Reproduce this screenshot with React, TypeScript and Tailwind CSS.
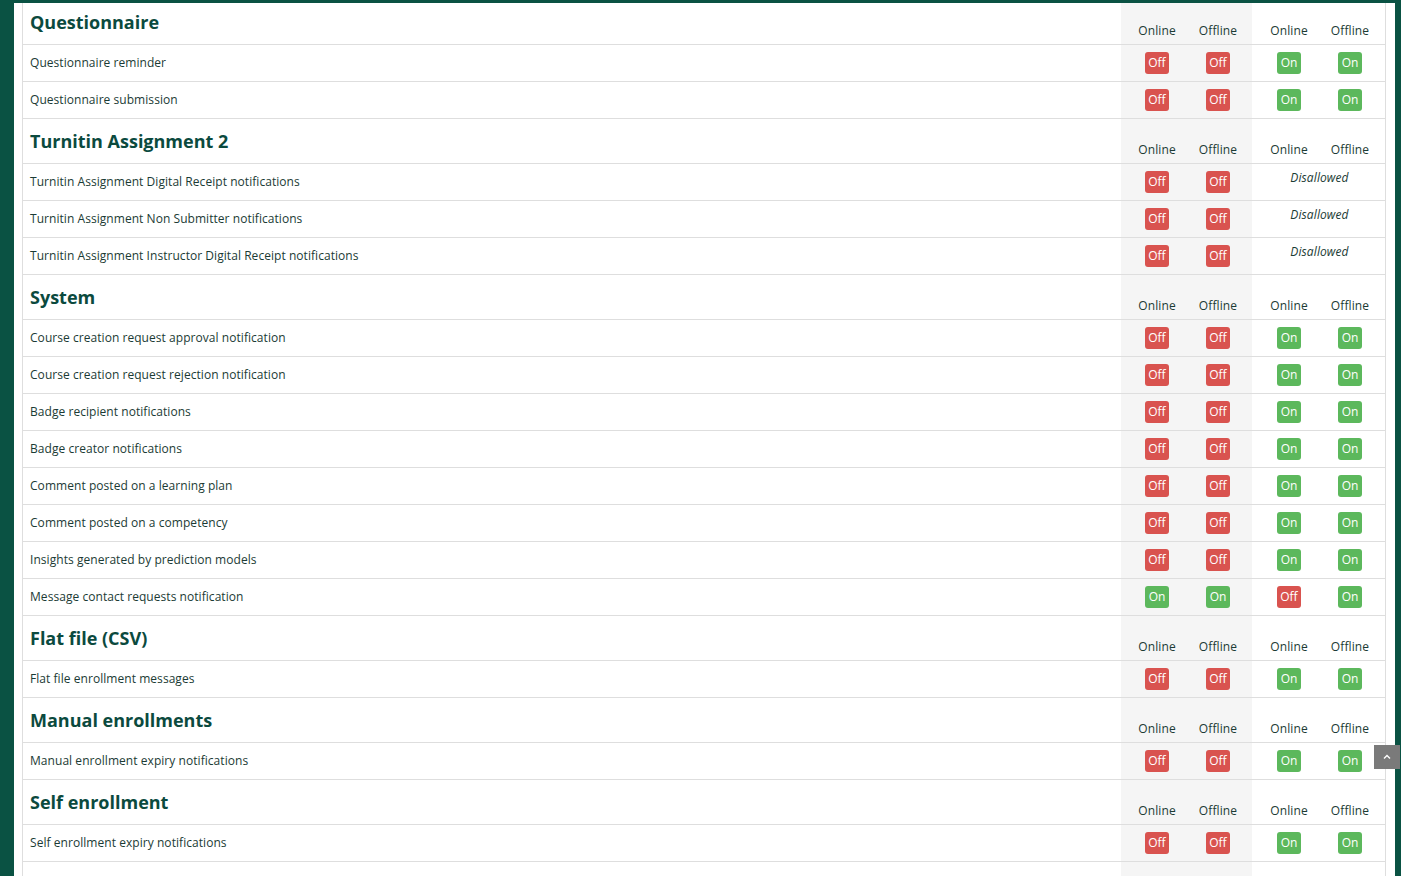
import React from "react";

type State = "on" | "off" | "dis";

interface Row {
  label: string;
  values: State[];
}

interface Section {
  title: string;
  rows: Row[];
}

const OFF_ON: State[] = ["off", "off", "on", "on"];
const OFF_DIS: State[] = ["off", "off", "dis", "dis"];

const sections: Section[] = [
  {
    title: "Questionnaire",
    rows: [
      { label: "Questionnaire reminder", values: OFF_ON },
      { label: "Questionnaire submission", values: OFF_ON },
    ],
  },
  {
    title: "Turnitin Assignment 2",
    rows: [
      { label: "Turnitin Assignment Digital Receipt notifications", values: OFF_DIS },
      { label: "Turnitin Assignment Non Submitter notifications", values: OFF_DIS },
      { label: "Turnitin Assignment Instructor Digital Receipt notifications", values: OFF_DIS },
    ],
  },
  {
    title: "System",
    rows: [
      { label: "Course creation request approval notification", values: OFF_ON },
      { label: "Course creation request rejection notification", values: OFF_ON },
      { label: "Badge recipient notifications", values: OFF_ON },
      { label: "Badge creator notifications", values: OFF_ON },
      { label: "Comment posted on a learning plan", values: OFF_ON },
      { label: "Comment posted on a competency", values: OFF_ON },
      { label: "Insights generated by prediction models", values: OFF_ON },
      { label: "Message contact requests notification", values: ["on", "on", "off", "on"] },
    ],
  },
  {
    title: "Flat file (CSV)",
    rows: [{ label: "Flat file enrollment messages", values: OFF_ON }],
  },
  {
    title: "Manual enrollments",
    rows: [{ label: "Manual enrollment expiry notifications", values: OFF_ON }],
  },
  {
    title: "Self enrollment",
    rows: [{ label: "Self enrollment expiry notifications", values: OFF_ON }],
  },
];

const Badge: React.FC<{ on: boolean }> = ({ on }) => (
  <span
    className={`inline-flex h-[22px] w-[24px] items-center justify-center rounded-[3px] text-[12px] leading-none text-white ${
      on ? "bg-[#5cb85c]" : "bg-[#d9534f]"
    }`}
  >
    {on ? "On" : "Off"}
  </span>
);

const SectionHeader: React.FC<{ title: string; first?: boolean }> = ({ title, first }) => (
  <div className={`flex border-b border-[#dedede] ${first ? "h-[42px]" : "h-[45px]"}`}>
    <div className={`flex-1 pl-[7px] ${first ? "pt-[6px]" : "pt-[9px]"}`}>
      <h3 className="text-[18px] font-bold leading-[27px] text-[#0b4a3e]">{title}</h3>
    </div>
    <div className="flex w-[72px] items-end justify-center bg-[#f5f5f5] pb-[5px]">
      <span className="text-[12px] leading-[17px] tracking-[0.1px] text-[#1b3b35]">Online</span>
    </div>
    <div className="flex w-[59px] items-end justify-center bg-[#f5f5f5] pr-[9px] pb-[5px]">
      <span className="text-[12px] leading-[17px] tracking-[0.1px] text-[#1b3b35]">Offline</span>
    </div>
    <div className="flex w-[74px] items-end justify-center pb-[5px]">
      <span className="text-[12px] leading-[17px] tracking-[0.1px] text-[#1b3b35]">Online</span>
    </div>
    <div className="flex w-[59px] items-end justify-center pr-[11px] pb-[5px]">
      <span className="text-[12px] leading-[17px] tracking-[0.1px] text-[#1b3b35]">Offline</span>
    </div>
  </div>
);

const ValueRow: React.FC<{ row: Row }> = ({ row }) => {
  const dis = row.values[2] === "dis";
  return (
    <div className="flex h-[37px] border-b border-[#dedede]">
      <div className="flex flex-1 items-center pl-[7px] text-[12px] tracking-[0.05px] text-[#1b3b35]">
        {row.label}
      </div>
      <div className="flex w-[72px] items-center justify-center bg-[#f5f5f5]">
        <Badge on={row.values[0] === "on"} />
      </div>
      <div className="flex w-[59px] items-center justify-center bg-[#f5f5f5] pr-[9px]">
        <Badge on={row.values[1] === "on"} />
      </div>
      {dis ? (
        <div className="flex w-[133px] justify-center pt-[5px] pl-[2px]">
          <em className="text-[12px] leading-[17px] tracking-[0.1px] text-[#1b3b35]">Disallowed</em>
        </div>
      ) : (
        <>
          <div className="flex w-[74px] items-center justify-center">
            <Badge on={row.values[2] === "on"} />
          </div>
          <div className="flex w-[59px] items-center justify-center pr-[11px]">
            <Badge on={row.values[3] === "on"} />
          </div>
        </>
      )}
    </div>
  );
};

export default function App() {
  return (
    <div
      className="relative h-[876px] w-[1401px] overflow-hidden bg-[#0a5243] pt-[3px] pl-[14px] pr-[6px]"
      style={{ fontFamily: '"Open Sans", "Liberation Sans", sans-serif' }}
    >
      <div className="h-full bg-white pl-[8px] pr-[9px]">
        <div className="border-x border-[#dedede]">
          {sections.map((s, i) => (
            <div key={s.title}>
              <SectionHeader title={s.title} first={i === 0} />
              {s.rows.map((r) => (
                <ValueRow key={r.label} row={r} />
              ))}
            </div>
          ))}
          <div className="flex h-[40px]">
            <div className="flex-1" />
            <div className="w-[131px] bg-[#f5f5f5]" />
            <div className="w-[133px]" />
          </div>
        </div>
      </div>
      {/* back to top */}
      <button className="absolute top-[745px] left-[1374px] flex h-[24px] w-[26px] items-center justify-center bg-[#7a7a7a]">
        <svg width="8" height="6" viewBox="0 0 8 6" fill="none">
          <path d="M1 4.5 L4 1.5 L7 4.5" stroke="white" strokeWidth="1.4" />
        </svg>
      </button>
    </div>
  );
}
